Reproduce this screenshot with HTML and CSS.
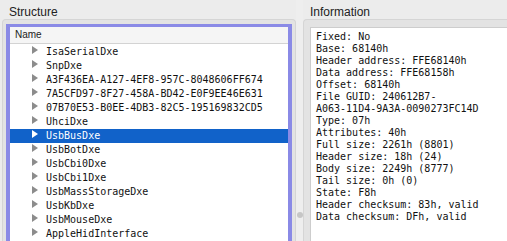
FILE: index.html
```
<!DOCTYPE html>
<html>
<head>
<meta charset="utf-8">
<link rel="stylesheet" href="styles.css">
</head>
<body>
<div class="app">
  <div class="pane pane-left">
    <div class="label">Structure</div>
    <div class="group group-left">
      <div class="tree">
        <div class="tree-header">Name</div>
        <div class="rows">
          <div class="row"><svg class="arrow" width="6" height="8" viewBox="0 0 6 8"><polygon points="0,0 6,4 0,8"/></svg><span class="name">IsaSerialDxe</span></div>
          <div class="row"><svg class="arrow" width="6" height="8" viewBox="0 0 6 8"><polygon points="0,0 6,4 0,8"/></svg><span class="name">SnpDxe</span></div>
          <div class="row"><svg class="arrow" width="6" height="8" viewBox="0 0 6 8"><polygon points="0,0 6,4 0,8"/></svg><span class="name">A3F436EA-A127-4EF8-957C-8048606FF674</span></div>
          <div class="row"><svg class="arrow" width="6" height="8" viewBox="0 0 6 8"><polygon points="0,0 6,4 0,8"/></svg><span class="name">7A5CFD97-8F27-458A-BD42-E0F9EE46E631</span></div>
          <div class="row"><svg class="arrow" width="6" height="8" viewBox="0 0 6 8"><polygon points="0,0 6,4 0,8"/></svg><span class="name">07B70E53-B0EE-4DB3-82C5-195169832CD5</span></div>
          <div class="row"><svg class="arrow" width="6" height="8" viewBox="0 0 6 8"><polygon points="0,0 6,4 0,8"/></svg><span class="name">UhciDxe</span></div>
          <div class="row selected"><svg class="arrow" width="6" height="8" viewBox="0 0 6 8"><polygon points="0,0 6,4 0,8"/></svg><span class="name">UsbBusDxe</span></div>
          <div class="row"><svg class="arrow" width="6" height="8" viewBox="0 0 6 8"><polygon points="0,0 6,4 0,8"/></svg><span class="name">UsbBotDxe</span></div>
          <div class="row"><svg class="arrow" width="6" height="8" viewBox="0 0 6 8"><polygon points="0,0 6,4 0,8"/></svg><span class="name">UsbCbi0Dxe</span></div>
          <div class="row"><svg class="arrow" width="6" height="8" viewBox="0 0 6 8"><polygon points="0,0 6,4 0,8"/></svg><span class="name">UsbCbi1Dxe</span></div>
          <div class="row"><svg class="arrow" width="6" height="8" viewBox="0 0 6 8"><polygon points="0,0 6,4 0,8"/></svg><span class="name">UsbMassStorageDxe</span></div>
          <div class="row"><svg class="arrow" width="6" height="8" viewBox="0 0 6 8"><polygon points="0,0 6,4 0,8"/></svg><span class="name">UsbKbDxe</span></div>
          <div class="row"><svg class="arrow" width="6" height="8" viewBox="0 0 6 8"><polygon points="0,0 6,4 0,8"/></svg><span class="name">UsbMouseDxe</span></div>
          <div class="row"><svg class="arrow" width="6" height="8" viewBox="0 0 6 8"><polygon points="0,0 6,4 0,8"/></svg><span class="name">AppleHidInterface</span></div>
        </div>
      </div>
    </div>
  </div>
  <div class="splitter"><div class="handle"></div></div>
  <div class="pane pane-right">
    <div class="label">Information</div>
    <div class="group group-right">
      <div class="info">Fixed: No
Base: 68140h
Header address: FFE68140h
Data address: FFE68158h
Offset: 68140h
File GUID: 240612B7-
A063-11D4-9A3A-0090273FC14D
Type: 07h
Attributes: 40h
Full size: 2261h (8801)
Header size: 18h (24)
Body size: 2249h (8777)
Tail size: 0h (0)
State: F8h
Header checksum: 83h, valid
Data checksum: DFh, valid</div>
    </div>
  </div>
</div>
</body>
</html>
```
FILE: styles.css
```
html, body {
  margin: 0;
  padding: 0;
}
body {
  width: 507px;
  height: 241px;
  overflow: hidden;
  background: #ececec;
  font-family: "Liberation Sans", Arial, sans-serif;
}
.app {
  display: flex;
  height: 241px;
}
.pane {
  display: flex;
  flex-direction: column;
  box-sizing: border-box;
}
.pane-left {
  width: 296px;
  padding-left: 2px;
}
.pane-right {
  flex: 1;
  min-width: 0;
}
.label {
  font-size: 12px;
  line-height: 14px;
  height: 14px;
  margin-top: 5px;
  padding-left: 7px;
  color: #222;
}
.group {
  flex: 1;
  min-height: 0;
  background: #e3e3e3;
  border: 1px solid #d5d5d5;
  border-bottom: none;
}
.group-left {
  border-radius: 4px 4px 0 0;
  padding: 4px 3px 0 3px;
  display: flex;
}
.group-right {
  border-right: none;
  border-radius: 4px 0 0 0;
  padding: 7px 0 0 6px;
  display: flex;
}
.tree {
  flex: 1;
  min-width: 0;
  background: #fff;
  border-style: solid;
  border-color: #8a8ae6;
  border-width: 3px 4px 0 4px;
  overflow: hidden;
  display: flex;
  flex-direction: column;
}
.tree-header {
  height: 16px;
  line-height: 16px;
  font-size: 10px;
  padding-left: 5px;
  color: #222;
  background: #f5f5f5;
  border-bottom: 1px solid #d3d3d3;
  flex: none;
}
.rows {
  padding-top: 1px;
}
.row {
  height: 14px;
  display: flex;
  align-items: flex-start;
  padding-left: 22px;
  white-space: nowrap;
  font-family: "DejaVu Sans Mono", "Liberation Mono", monospace;
  font-size: 10px;
  color: #111;
}
.arrow {
  flex: none;
  margin-top: 1px;
  margin-right: 8px;
  fill: #8c8c8c;
}
.name {
  line-height: 14px;
}
.row.selected {
  background: #1162c9;
  color: #fff;
}
.row.selected .arrow {
  fill: #fff;
}
.splitter {
  width: 7px;
  flex: none;
  background: #eeeeee;
  display: flex;
  flex-direction: column;
  align-items: center;
  padding-top: 212px;
  box-sizing: border-box;
}
.handle {
  width: 6px;
  height: 6px;
  border-radius: 50%;
  background: #c6c6c6;
}
.info {
  flex: 1;
  min-width: 0;
  background: #fff;
  border: 1px solid #cdcdcd;
  border-right: none;
  border-bottom: none;
  padding: 3px 0 0 5px;
  white-space: pre;
  font-family: "DejaVu Sans Mono", "Liberation Mono", monospace;
  font-size: 10px;
  line-height: 12px;
  color: #111;
  overflow: hidden;
}
```
